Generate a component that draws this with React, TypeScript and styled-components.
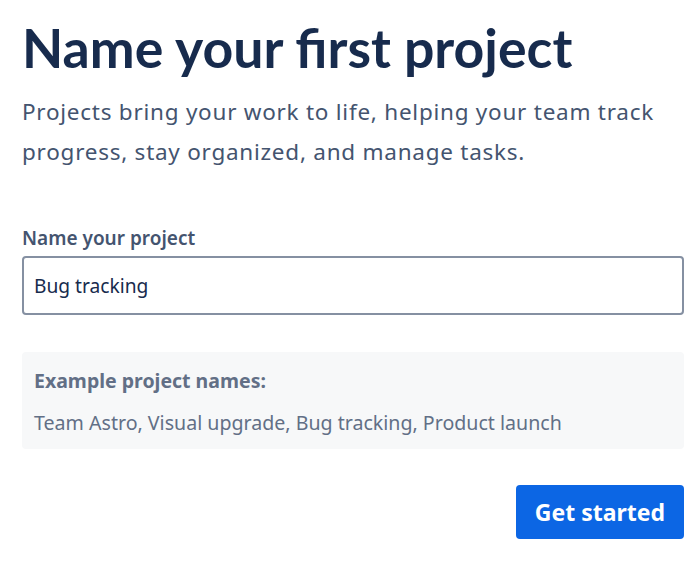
import React, { useState } from 'react';
import styled, { createGlobalStyle } from 'styled-components';

const GlobalStyle = createGlobalStyle`
  html, body {
    margin: 0;
    padding: 0;
    background: #fff;
  }
  body {
    font-family: "Noto Sans", "Open Sans", sans-serif;
    color: #172b4d;
  }
`;

const Page = styled.div`
  width: 662px;
  padding: 16px 13px 0 22px;
  display: flex;
  flex-direction: column;
`;

const Heading = styled.h1`
  margin: 0;
  font-family: "Lato", "Noto Sans", sans-serif;
  font-size: 53.6px;
  font-weight: 700;
  line-height: 62px;
  color: #172b4d;
`;

const Lead = styled.p`
  margin: 14px 0 0;
  font-size: 22.5px;
  letter-spacing: 0.75px;
  line-height: 40px;
  color: #44546f;
`;

const Field = styled.div`
  margin-top: 54px;
  display: flex;
  flex-direction: column;
  gap: 6px;
`;

const Label = styled.label`
  font-size: 19px;
  font-weight: 600;
  line-height: 24px;
  color: #44546f;
`;

const Input = styled.input`
  box-sizing: border-box;
  width: 100%;
  height: 59px;
  padding: 0 10px;
  border: 2px solid #8590a2;
  border-radius: 4px;
  font-family: inherit;
  font-size: 19.2px;
  color: #172b4d;
  background: #fff;
  outline: none;
`;

const Examples = styled.div`
  margin-top: 37px;
  padding: 16px 12px 12px;
  background: #f7f8f9;
  border-radius: 4px;
  display: flex;
  flex-direction: column;
  gap: 15px;
`;

const ExamplesTitle = styled.div`
  font-size: 19.5px;
  font-weight: 700;
  line-height: 26px;
  color: #626f86;
`;

const ExamplesList = styled.div`
  font-size: 19.6px;
  line-height: 28px;
  color: #626f86;
`;

const Footer = styled.div`
  margin-top: 36px;
  display: flex;
  justify-content: flex-end;
`;

const PrimaryButton = styled.button`
  height: 54px;
  padding: 0 19px;
  border: none;
  border-radius: 4px;
  background: #0c66e4;
  color: #fff;
  font-family: "Noto Sans", sans-serif;
  font-size: 23px;
  font-weight: 700;
  cursor: pointer;
`;

export default function App() {
  const [name, setName] = useState('Bug tracking');

  return (
    <>
      <GlobalStyle />
      <Page>
        <Heading>Name your first project</Heading>
        <Lead>
          Projects bring your work to life, helping your team track progress, stay organized, and manage tasks.
        </Lead>
        <Field>
          <Label htmlFor="project-name">Name your project</Label>
          <Input id="project-name" value={name} onChange={e => setName(e.target.value)} />
        </Field>
        <Examples>
          <ExamplesTitle>Example project names:</ExamplesTitle>
          <ExamplesList>Team Astro, Visual upgrade, Bug tracking, Product launch</ExamplesList>
        </Examples>
        <Footer>
          <PrimaryButton>Get started</PrimaryButton>
        </Footer>
      </Page>
    </>
  );
}
